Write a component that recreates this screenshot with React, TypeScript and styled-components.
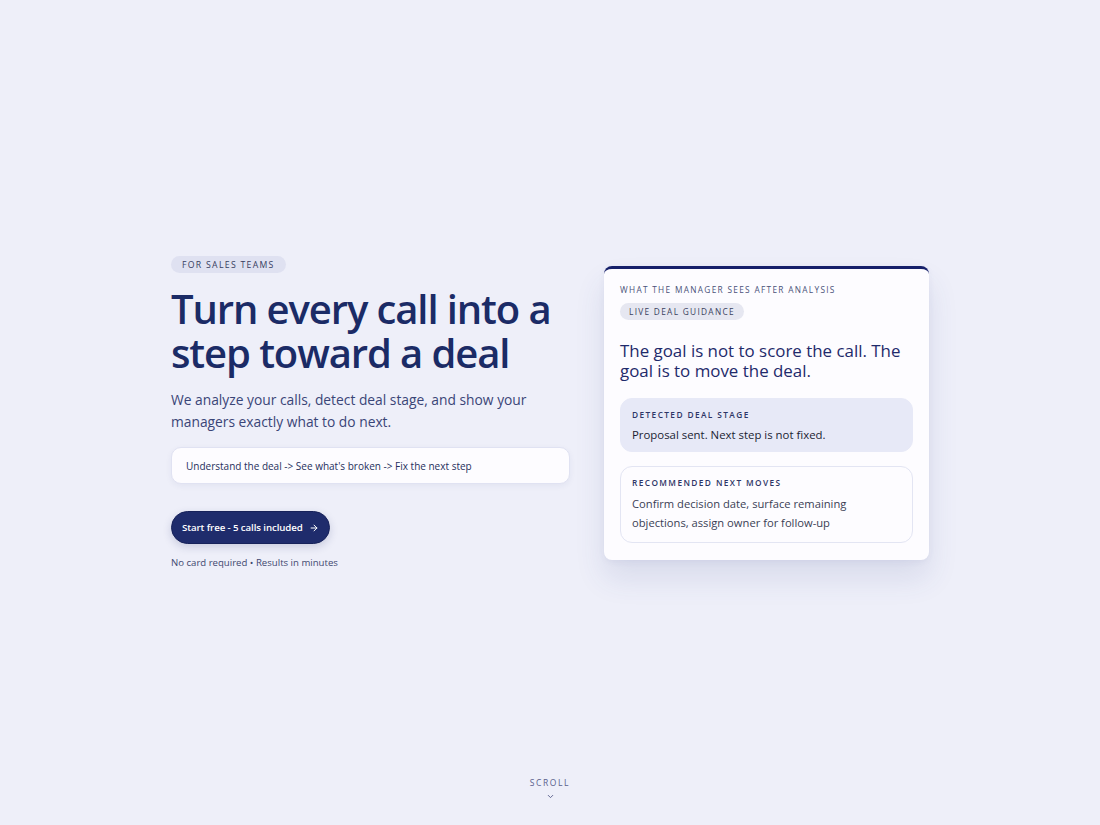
import React from "react";
import styled, { createGlobalStyle } from "styled-components";

const Global = createGlobalStyle`
  html, body { margin: 0; padding: 0; }
  body {
    background: #eeeff9;
    font-family: "Open Sans", "Noto Sans", sans-serif;
    -webkit-font-smoothing: antialiased;
  }
  * { box-sizing: border-box; }
`;

const Page = styled.div`
  height: 825px;
  display: flex;
  flex-direction: column;
`;

const Hero = styled.main`
  flex: 1;
  display: flex;
  align-items: center;
  justify-content: center;
  gap: 34px;
  padding-top: 48px;
`;

const Left = styled.section`
  width: 399px;
  display: flex;
  flex-direction: column;
  align-items: flex-start;
`;

const Pill = styled.span`
  display: inline-flex;
  align-items: center;
  height: 17px;
  padding: 0 11px;
  border-radius: 999px;
  background: #dfe1f1;
  color: #363c60;
  font-size: 8.7px;
  font-weight: 500;
  letter-spacing: 1.3px;
  text-transform: uppercase;
`;

const Title = styled.h1`
  margin: 14px 0 0;
  font-size: 40px;
  line-height: 44px;
  font-weight: 600;
  letter-spacing: -1.1px;
  color: #1b2b66;
`;

const Lead = styled.p`
  margin: 14px 0 0;
  font-size: 13.8px;
  line-height: 22px;
  color: #3a4577;
`;

const Flow = styled.div`
  margin-top: 14px;
  width: 100%;
  height: 37px;
  display: flex;
  align-items: center;
  padding: 0 14px;
  background: #fdfcff;
  border: 1px solid #e0e2f2;
  border-radius: 10px;
  box-shadow: 0 2px 6px rgba(40, 50, 120, 0.06);
  font-size: 10px;
  font-weight: 500;
  color: #262f5c;
`;

const CTA = styled.button`
  margin-top: 27px;
  height: 33px;
  padding: 0 10px 0 10px;
  display: inline-flex;
  align-items: center;
  gap: 6px;
  border: 1px solid #17225a;
  border-radius: 999px;
  background: #1f2c6c;
  color: #fff;
  font-family: inherit;
  font-size: 9.7px;
  font-weight: 600;
  letter-spacing: -0.1px;
  cursor: pointer;
  box-shadow: 0 3px 8px rgba(31, 44, 108, 0.18);
`;

const Note = styled.p`
  margin: 12px 0 0;
  font-size: 9.6px;
  color: #3f4870;
`;

const Card = styled.aside`
  width: 325px;
  background: #fdfcff;
  border-radius: 8px;
  border-top: 3px solid #16206a;
  padding: 15px 16px 17px;
  box-shadow: 0 18px 30px rgba(60, 70, 140, 0.12), 0 2px 6px rgba(60, 70, 140, 0.06);
  display: flex;
  flex-direction: column;
  align-items: flex-start;
`;

const Eyebrow = styled.div`
  font-size: 8.3px;
  line-height: 12px;
  font-weight: 500;
  letter-spacing: 1.3px;
  color: #4a5279;
  text-transform: uppercase;
`;

const CardPill = styled(Pill)`
  margin-top: 7px;
  padding: 0 9px;
  background: #e6e7f1;
  color: #3a3f5e;
  font-size: 8.3px;
`;

const CardTitle = styled.h2`
  margin: 21px 0 0;
  font-size: 16.9px;
  line-height: 20px;
  font-weight: 500;
  color: #1f2a6b;
`;

const Box = styled.div<{ $tone: "soft" | "plain" }>`
  margin-top: ${(p) => (p.$tone === "soft" ? "17px" : "14px")};
  width: 100%;
  border-radius: 12px;
  padding: ${(p) => (p.$tone === "soft" ? "10px 11px 7px" : "10px 11px 10px")};
  background: ${(p) => (p.$tone === "soft" ? "#e7e9f7" : "#fdfcff")};
  border: 1px solid ${(p) => (p.$tone === "soft" ? "#e7e9f7" : "#e3e5f3")};
`;

const BoxLabel = styled.div`
  font-size: 8.3px;
  line-height: 12px;
  font-weight: 600;
  letter-spacing: 1.4px;
  color: #2d3566;
  text-transform: uppercase;
`;

const BoxText = styled.p<{ $strong?: boolean }>`
  margin: 5px 0 0;
  font-size: ${(p) => (p.$strong ? "11.4px" : "11.2px")};
  line-height: ${(p) => (p.$strong ? "18px" : "19px")};
  font-weight: ${(p) => (p.$strong ? 500 : 400)};
  color: ${(p) => (p.$strong ? "#1a1d33" : "#3a3e55")};
`;

const Scroll = styled.footer`
  height: 48px;
  display: flex;
  flex-direction: column;
  align-items: center;
  gap: 3px;
  color: #5a5f8c;
`;

const ScrollLabel = styled.span`
  font-size: 8.5px;
  line-height: 12px;
  font-weight: 500;
  letter-spacing: 1.6px;
`;

const Arrow = () => (
  <svg width="10" height="10" viewBox="0 0 24 24" fill="none" stroke="currentColor" strokeWidth="2.4" strokeLinecap="round" strokeLinejoin="round">
    <path d="M5 12h14" />
    <path d="m12 5 7 7-7 7" />
  </svg>
);

const Chevron = () => (
  <svg width="9" height="9" viewBox="0 0 24 24" fill="none" stroke="currentColor" strokeWidth="2.5" strokeLinecap="round" strokeLinejoin="round">
    <path d="m6 9 6 6 6-6" />
  </svg>
);

export default function App() {
  return (
    <Page>
      <Global />
      <Hero>
        <Left>
          <Pill>For sales teams</Pill>
          <Title>
            Turn every call into a
            <br />
            step toward a deal
          </Title>
          <Lead>
            We analyze your calls, detect deal stage, and show your
            <br />
            managers exactly what to do next.
          </Lead>
          <Flow>Understand the deal -&gt; See what's broken -&gt; Fix the next step</Flow>
          <CTA>
            Start free - 5 calls included
            <Arrow />
          </CTA>
          <Note>No card required • Results in minutes</Note>
        </Left>
        <Card>
          <Eyebrow>What the manager sees after analysis</Eyebrow>
          <CardPill>Live deal guidance</CardPill>
          <CardTitle>The goal is not to score the call. The goal is to move the deal.</CardTitle>
          <Box $tone="soft">
            <BoxLabel>Detected deal stage</BoxLabel>
            <BoxText $strong>Proposal sent. Next step is not fixed.</BoxText>
          </Box>
          <Box $tone="plain">
            <BoxLabel>Recommended next moves</BoxLabel>
            <BoxText>Confirm decision date, surface remaining objections, assign owner for follow-up</BoxText>
          </Box>
        </Card>
      </Hero>
      <Scroll>
        <ScrollLabel>SCROLL</ScrollLabel>
        <Chevron />
      </Scroll>
    </Page>
  );
}
